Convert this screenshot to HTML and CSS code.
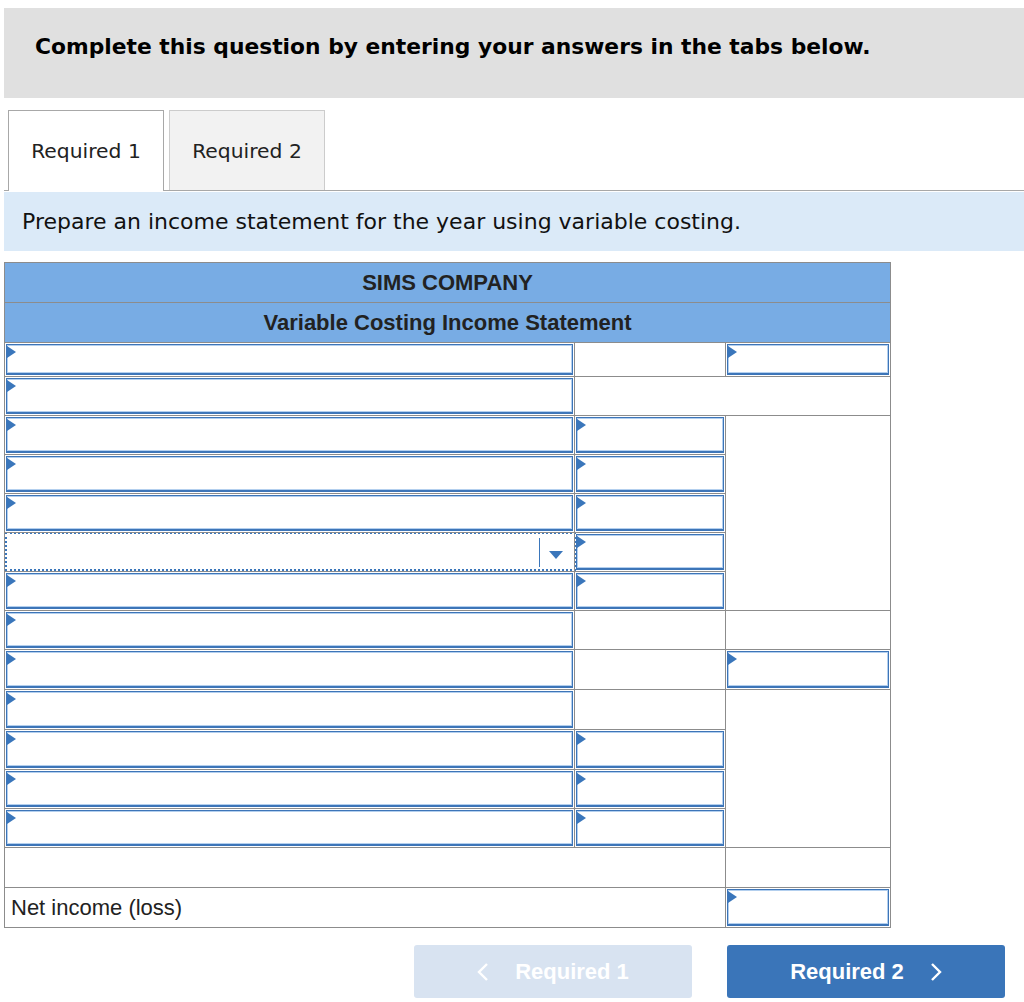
FILE: index.html
```html
<!DOCTYPE html>
<html>
<head>
  <link rel="stylesheet" href="styles.css">
</head>
<body>
  <div class="page">
    <div class="banner">
      <h1>Complete this question by entering your answers in the tabs below.</h1>
    </div>

    <div class="tabs">
      <div class="tab active">Required 1</div>
      <div class="tab">Required 2</div>
    </div>

    <div class="instructions">Prepare an income statement for the year using variable costing.</div>

    <table class="statement">
      <colgroup>
        <col class="col-label">
        <col class="col-amount">
        <col class="col-total">
      </colgroup>
      <tr class="head"><th colspan="3">SIMS COMPANY</th></tr>
      <tr class="head"><th colspan="3">Variable Costing Income Statement</th></tr>

      <tr class="short">
        <td><div class="field mark"></div></td>
        <td></td>
        <td><div class="field mark"></div></td>
      </tr>
      <tr>
        <td><div class="field mark"></div></td>
        <td colspan="2"></td>
      </tr>
      <tr>
        <td><div class="field mark"></div></td>
        <td><div class="field mark"></div></td>
        <td rowspan="5"></td>
      </tr>
      <tr>
        <td><div class="field mark"></div></td>
        <td><div class="field mark"></div></td>
      </tr>
      <tr>
        <td><div class="field mark"></div></td>
        <td><div class="field mark"></div></td>
      </tr>
      <tr>
        <td>
          <div class="select">
            <span class="select-value"></span>
            <span class="select-arrow"></span>
          </div>
        </td>
        <td><div class="field mark"></div></td>
      </tr>
      <tr>
        <td><div class="field mark"></div></td>
        <td><div class="field mark"></div></td>
      </tr>
      <tr>
        <td><div class="field mark"></div></td>
        <td></td>
        <td></td>
      </tr>
      <tr class="tall">
        <td><div class="field mark"></div></td>
        <td></td>
        <td><div class="field mark"></div></td>
      </tr>
      <tr class="tall">
        <td><div class="field mark"></div></td>
        <td></td>
        <td rowspan="4"></td>
      </tr>
      <tr class="tall">
        <td><div class="field mark"></div></td>
        <td><div class="field mark"></div></td>
      </tr>
      <tr>
        <td><div class="field mark"></div></td>
        <td><div class="field mark"></div></td>
      </tr>
      <tr>
        <td><div class="field mark"></div></td>
        <td><div class="field mark"></div></td>
      </tr>
      <tr class="blank">
        <td colspan="2"></td>
        <td></td>
      </tr>
      <tr class="tall">
        <td colspan="2" class="caption">Net income (loss)</td>
        <td><div class="field mark"></div></td>
      </tr>
    </table>

    <div class="nav">
      <button class="nav-btn prev" disabled>
        <svg width="12" height="20" viewBox="0 0 12 20"><polyline points="10,2 2,10 10,18" fill="none" stroke="currentColor" stroke-width="2.4"/></svg>
        <span>Required 1</span>
      </button>
      <button class="nav-btn next">
        <span>Required 2</span>
        <svg width="12" height="20" viewBox="0 0 12 20"><polyline points="2,2 10,10 2,18" fill="none" stroke="currentColor" stroke-width="2.4"/></svg>
      </button>
    </div>
  </div>
</body>
</html>
```

FILE: styles.css
```css
body {
  margin: 0;
  font-family: "DejaVu Sans", Verdana, sans-serif;
  color: #000;
  background: #fff;
}
.page {
  padding: 8px 0 0 4px;
}
.banner {
  background-color: #e0e0e0;
  height: 90px;
  display: flex;
  align-items: center;
  padding-left: 31px;
}
.banner h1 {
  margin: 0 0 14px 0;
  font-size: 21.8px;
  font-weight: bold;
}
.tabs {
  display: flex;
  gap: 5px;
  margin-top: 12px;
  padding-left: 4px;
  border-bottom: 1px solid #a8a8a8;
}
.tab {
  box-sizing: border-box;
  width: 156px;
  height: 80px;
  display: flex;
  align-items: center;
  justify-content: center;
  border: 1px solid #cccccc;
  border-bottom: none;
  background-color: #f2f2f2;
  font-size: 20.3px;
  color: #222;
}
.tab.active {
  background-color: #fff;
  border-color: #a8a8a8;
  height: 81px;
  margin-bottom: -1px;
}
.instructions {
  margin-top: 1px;
  height: 59px;
  display: flex;
  align-items: center;
  padding-left: 18px;
  background-color: #dbeaf8;
  font-size: 22px;
  color: #111;
}
.statement {
  margin-top: 11px;
  width: 886px;
  border-collapse: collapse;
  table-layout: fixed;
  font-family: "Liberation Sans", Arial, sans-serif;
}
.col-label {
  width: 570px;
}
.col-amount {
  width: 151px;
}
.col-total {
  width: 165px;
}
.statement th,
.statement td {
  border: 1px solid #8c8c8c;
  padding: 1px;
}
.statement th {
  background-color: #78ace4;
  color: #222;
  font-size: 22px;
  font-weight: bold;
  height: 39px;
  padding: 0;
}
.statement tr.blank td {
  height: 37px;
}
.statement td.caption {
  font-size: 22px;
  color: #222;
  padding-left: 6px;
}
.field {
  position: relative;
  box-sizing: border-box;
  height: 36px;
  border: 1px solid #3d75b8;
  border-bottom-width: 2px;
  box-shadow: inset 0 0 0 1px #b3cfee;
  background-color: #fff;
}
tr.short .field {
  height: 31px;
}
tr.tall .field {
  height: 37px;
}
.field.mark:before {
  content: "";
  position: absolute;
  left: 0;
  top: 1px;
  border-left: 9px solid #3a76bb;
  border-top: 6px solid transparent;
  border-bottom: 6px solid transparent;
}
.select {
  box-sizing: border-box;
  height: 39px;
  margin: -2px -3px -1px -1px;
  display: flex;
  border: 2px dotted #3a76bb;
  background-color: #fff;
}
.select-value {
  flex: 1;
}
.select-arrow {
  position: relative;
  width: 34px;
  margin: 4px 0 2px 0;
  border-left: 1px solid #3a76bb;
}
.select-arrow:after {
  content: "";
  position: absolute;
  left: 9px;
  top: 13px;
  border-top: 8px solid #3a76bb;
  border-left: 7px solid transparent;
  border-right: 7px solid transparent;
}
.nav {
  display: flex;
  justify-content: flex-end;
  gap: 35px;
  margin-top: 17px;
  padding-right: 19px;
}
.nav-btn {
  width: 278px;
  height: 53px;
  display: flex;
  align-items: center;
  justify-content: center;
  gap: 26px;
  border: none;
  border-radius: 3px;
  font-family: "Liberation Sans", Arial, sans-serif;
  font-size: 22px;
  font-weight: bold;
  color: #fff;
  cursor: pointer;
}
.nav-btn.prev {
  background-color: #d8e3f1;
  cursor: default;
}
.nav-btn.next {
  background-color: #3a75b9;
}
```
